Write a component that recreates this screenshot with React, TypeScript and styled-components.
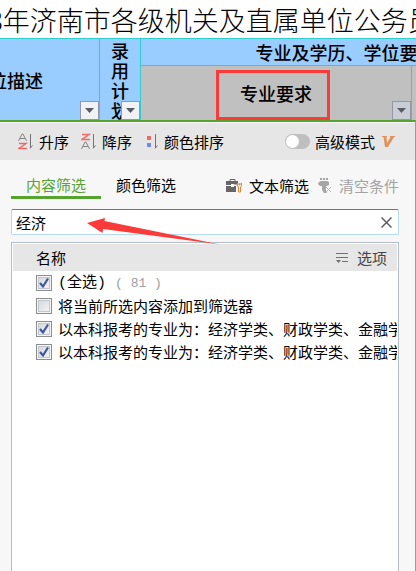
import React, { useState } from "react";
import styled, { createGlobalStyle } from "styled-components";

const GlobalStyle = createGlobalStyle`
  * { box-sizing: border-box; }
  body {
    margin: 0;
    background: #fff;
    color: #000;
    font-family: "Noto Sans CJK SC", sans-serif;
    font-size: 15px;
    line-height: 20px;
    overflow: hidden;
  }
  button, input { font: inherit; color: inherit; }
  svg { display: block; flex: none; }
`;

const Page = styled.main`
  display: flex;
  flex-direction: column;
  height: 100vh;
  overflow: hidden;
`;

const SheetView = styled.section`
  flex: none;
  overflow: hidden;
`;

/* The sheet is scrolled sideways, so it runs past both edges of the view. */
const Sheet = styled.table`
  width: calc(100% + 220px);
  margin-left: -85px;
  table-layout: fixed;
  border-collapse: separate;
  border-spacing: 0;
`;

const TitleCell = styled.td`
  height: 38px;
  padding: 2px 0 1px 30px;
  font-family: "Noto Sans CJK SC", sans-serif;
  font-weight: 300;
  font-size: 27px;
  line-height: 35px;
  text-align: left;
  white-space: nowrap;
`;

const HeadCell = styled.th<{ $selected?: boolean; $height: number }>`
  position: relative;
  height: ${(p) => p.$height}px;
  padding: 0;
  background: ${(p) => (p.$selected ? "#c0c0c0" : "#99ccff")};
  border-top: 1px solid #33cccc;
  border-right: 1px solid #33cccc;
  font-size: 18px;
  font-weight: 500;
  line-height: 20px;
`;

const Stacked = styled.span`
  display: block;
  width: 18px;
  height: 80px;
  margin: 0 auto;
`;

const FilterButton = styled.button<{ $active?: boolean }>`
  position: absolute;
  right: 0;
  bottom: 0;
  display: grid;
  place-items: center;
  width: 19px;
  height: 19px;
  padding: 0;
  border: 1px solid #9696a6;
  background: ${(p) => (p.$active ? "#c9cdd5" : "#f0f2f5")};
`;

const Highlight = styled.span`
  position: absolute;
  left: 75px;
  top: 4px;
  width: 114px;
  height: 50px;
  border: 3px solid #fb3a3a;
`;

const Panel = styled.section`
  display: flex;
  flex-direction: column;
  flex: 1;
  min-height: 0;
  border-top: 2px solid #57a32f;
  border-right: 1px solid #9b9b9b;
  background: #f7f7f7;
`;

const Toolbar = styled.div`
  display: flex;
  align-items: center;
  height: 37px;
  margin-top: 1px;
  padding: 0 20px 0 18px;
  background: #e6e6e6;
`;

const PlainButton = styled.button<{ $muted?: boolean }>`
  display: flex;
  align-items: center;
  gap: 6px;
  padding: 0;
  border: 0;
  background: none;
  color: ${(p) => (p.$muted ? "#a3a3a3" : "#000")};
  white-space: nowrap;
`;

const SortGroup = styled.div`
  display: flex;
  gap: 12px;
`;

const ModeLabel = styled.label`
  display: flex;
  align-items: center;
  gap: 5px;
  margin-left: auto;
  white-space: nowrap;
`;

const Toggle = styled.input`
  appearance: none;
  width: 25px;
  height: 15px;
  margin: 0;
  padding: 1px;
  border-radius: 8px;
  background: #bfbfbf;
  &::before {
    content: "";
    display: block;
    width: 13px;
    height: 13px;
    border-radius: 50%;
    background: #fff;
  }
  &:checked { background: #57a32f; }
  &:checked::before { margin-left: auto; }
`;

const TabRow = styled.div`
  display: flex;
  align-items: center;
  height: 27px;
  margin: 12px 16px 0 11px;
`;

const Tab = styled.button<{ $current?: boolean }>`
  height: 27px;
  padding: 0 15px;
  border: 0;
  border-bottom: 3px solid ${(p) => (p.$current ? "#57a32f" : "transparent")};
  background: none;
  color: ${(p) => (p.$current ? "#57a32f" : "#000")};
  line-height: 26px;
  white-space: nowrap;
`;

const TabActions = styled.div`
  display: flex;
  gap: 9px;
  margin-left: auto;
`;

const SearchBox = styled.div`
  display: flex;
  align-items: center;
  height: 26px;
  margin: 10px 16px 0 11px;
  padding: 0 6px 0 4px;
  border: 1px solid #b5d9ee;
  border-top-color: #4682b4;
  border-radius: 2px;
  background: #fff;
`;

const SearchInput = styled.input`
  flex: 1;
  min-width: 0;
  height: 22px;
  padding: 0;
  border: 0;
  outline: 0;
  background: none;
`;

const List = styled.section`
  display: flex;
  flex-direction: column;
  flex: 1;
  min-height: 0;
  margin: 7px 16px 0 11px;
  padding: 1px;
  border: 1px solid #b4becb;
  border-bottom: 0;
  background: #fff;
`;

const ListHeader = styled.header`
  display: flex;
  align-items: center;
  justify-content: space-between;
  height: 27px;
  padding: 0 10px 0 23px;
  background: #e6e6e6;
`;

const Rows = styled.ul`
  margin: 0;
  padding: 0;
  list-style: none;
  overflow: hidden;
`;

const Row = styled.label`
  display: flex;
  align-items: center;
  gap: 6px;
  height: 23px;
  padding-left: 23px;
  white-space: nowrap;
`;

const BoxHolder = styled.span`
  display: grid;
  flex: none;
  > * { grid-area: 1 / 1; }
  > svg { pointer-events: none; }
`;

const Box = styled.input`
  appearance: none;
  width: 16px;
  height: 16px;
  margin: 0;
  border: 1px solid #8e8f8f;
  background: linear-gradient(135deg, #d2d5da, #f6f6f6);
  box-shadow: inset 0 0 0 1px #f4f4f4, inset 0 0 0 2px #c3c8d0;
  &:not(:checked) + svg { visibility: hidden; }
`;

const Mono = styled.span`
  font-family: "Liberation Mono", monospace;
`;

const Count = styled(Mono)`
  padding-left: 9px;
  color: #a0a0a0;
  font-size: 13px;
`;

const ArrowLayer = styled.div`
  position: relative;
  height: 0;
  svg {
    position: absolute;
    left: 86px;
    top: -18px;
    pointer-events: none;
  }
`;

const DropMark = () => (
  <svg width="11" height="7" viewBox="0 0 11 7" aria-hidden="true">
    <path d="M1 1h9L5.500 6z" fill="#5a5c64" />
  </svg>
);

const SortIcon = ({ down }: { down?: boolean }) => (
  <svg width="15" height="18" viewBox="0 0 15 18" fill="none" aria-hidden="true">
    <path d="M0.500 8 4 1h1l3.500 7M2 5.500h5" stroke="#858585" transform={down ? "translate(0 8)" : undefined} />
    <path d="M1 10.500h7L1 15.500h8" stroke="#ed6b6b" strokeWidth="1.500" transform={down ? "translate(0 -9)" : undefined} />
    <path d="M12.500 1v14M12 15.500l2.500-3" stroke="#747474" />
  </svg>
);

const ColorSortIcon = () => (
  <svg width="14" height="18" viewBox="-3 0 14 18" fill="none" aria-hidden="true">
    <path d="M0 3h4v4H0z" fill="#ed6b6b" />
    <path d="M0 10h4v4H0z" fill="#7587ed" />
    <path d="M8.500 1v14M8 15.500l2.500-3" stroke="#747474" />
  </svg>
);

const MemberMark = () => (
  <svg width="15" height="12" viewBox="-2 0 15 12" aria-hidden="true">
    <path d="M0 0h5v1H4.500l.5 6L8.500 1H8V0h5v1h-1L6 11H3L1.500 1H0z" fill="#df935e" />
  </svg>
);

const ToolboxIcon = () => (
  <svg width="17" height="15" viewBox="0 0 17 15" fill="none" aria-hidden="true">
    <path d="M4 3V1.500h5V3" stroke="#666" />
    <path d="M0 3h12v3.500H8V6H5v1H0zM0 8h5v1h3V8h2v6H0z" fill="#666" />
    <path d="M11.500 5v3l1 1v5h2V9l1-1V5M13 5v2h1V5" stroke="#e28632" />
  </svg>
);

const ClearIcon = () => (
  <svg width="15" height="16" viewBox="0 0 15 16" fill="none" aria-hidden="true">
    <path d="M2 0h2v2H2zM5 0h2v2H5zM8 0h2v2H8zM1 4l2-1h6l2 1v3L9 8H8v5l1 2H6L4 12V8H2L0 6z" fill="#a6a6a6" />
    <path d="M8 9l5 5M13 9l-5 5" stroke="#b5b5b5" />
  </svg>
);

const CloseIcon = () => (
  <svg width="11" height="11" viewBox="0 0 11 11" aria-hidden="true">
    <path d="M.5.5l10 10M10.500.5l-10 10" stroke="#5f5f5f" strokeWidth="1.500" />
  </svg>
);

const OptionsIcon = () => (
  <svg width="13" height="12" viewBox="0 0 13 12" aria-hidden="true">
    <path d="M0 1.500h12M0 5.500h12M6 9.500h6" stroke="#707070" />
    <path d="M0 8h5L2.500 11z" fill="#707070" />
  </svg>
);

const CheckMark = () => (
  <svg width="16" height="16" viewBox="0 0 16 16" fill="none" aria-hidden="true">
    <path d="M4 8l3 3.500L12 3.500" stroke="#41579b" strokeWidth="2.200" />
  </svg>
);

const OptionsButton = styled(PlainButton)`
  gap: 8px;
  color: #444;
`;

const subjects = "以本科报考的专业为：经济学类、财政学类、金融学类";
const rows: { text: React.ReactNode; count?: number; checked: boolean }[] = [
  { text: <><Mono>(</Mono>全选<Mono>)</Mono></>, count: 81, checked: true },
  { text: "将当前所选内容添加到筛选器", checked: false },
  { text: subjects, checked: true },
  { text: subjects, checked: true },
];

export default function App() {
  const [query, setQuery] = useState("经济");

  return (
    <Page>
      <GlobalStyle />
      <SheetView>
        <Sheet>
          <colgroup>
            <col style={{ width: 185 }} />
            <col style={{ width: 41 }} />
            <col style={{ width: 271 }} />
            <col />
          </colgroup>
          <tbody>
            <tr>
              <TitleCell colSpan={4}>2018年济南市各级机关及直属单位公务员</TitleCell>
            </tr>
            <tr>
              <HeadCell rowSpan={2} $height={82}>
                职位描述
                <FilterButton aria-label="筛选职位描述"><DropMark /></FilterButton>
              </HeadCell>
              <HeadCell rowSpan={2} $height={82}>
                <Stacked>录用计划</Stacked>
                <FilterButton aria-label="筛选录用计划"><DropMark /></FilterButton>
              </HeadCell>
              <HeadCell colSpan={2} $height={27}>专业及学历、学位要求</HeadCell>
            </tr>
            <tr>
              <HeadCell $selected $height={55}>
                专业要求
                <Highlight />
                <FilterButton $active aria-label="筛选专业要求"><DropMark /></FilterButton>
              </HeadCell>
              <HeadCell $selected $height={55} />
            </tr>
          </tbody>
        </Sheet>
      </SheetView>

      <Panel>
        <Toolbar>
          <SortGroup>
            <PlainButton><SortIcon />升序</PlainButton>
            <PlainButton><SortIcon down />降序</PlainButton>
            <PlainButton><ColorSortIcon />颜色排序</PlainButton>
          </SortGroup>
          <ModeLabel>
            <Toggle type="checkbox" role="switch" />
            高级模式
            <MemberMark />
          </ModeLabel>
        </Toolbar>

        <TabRow>
          <Tab $current>内容筛选</Tab>
          <Tab>颜色筛选</Tab>
          <TabActions>
            <PlainButton><ToolboxIcon />文本筛选</PlainButton>
            <PlainButton $muted><ClearIcon />清空条件</PlainButton>
          </TabActions>
        </TabRow>

        <SearchBox>
          <SearchInput aria-label="搜索" value={query} onChange={(e) => setQuery(e.target.value)} />
          <PlainButton aria-label="清除搜索" onClick={() => setQuery("")}><CloseIcon /></PlainButton>
        </SearchBox>
        <ArrowLayer>
          <svg width="135" height="30" viewBox="0 0 135 30" aria-hidden="true">
            <path d="M1 6 19 1l-.5 3L134 27.500 17 12l-.5 4z" fill="#fb3a3a" />
          </svg>
        </ArrowLayer>

        <List>
          <ListHeader>
            <span>名称</span>
            <OptionsButton><OptionsIcon />选项</OptionsButton>
          </ListHeader>
          <Rows>
            {rows.map((row, i) => (
              <li key={i}>
                <Row>
                  <BoxHolder>
                    <Box type="checkbox" defaultChecked={row.checked} />
                    <CheckMark />
                  </BoxHolder>
                  <span>
                    {row.text}
                    {row.count !== undefined && <Count>( {row.count} )</Count>}
                  </span>
                </Row>
              </li>
            ))}
          </Rows>
        </List>
      </Panel>
    </Page>
  );
}
